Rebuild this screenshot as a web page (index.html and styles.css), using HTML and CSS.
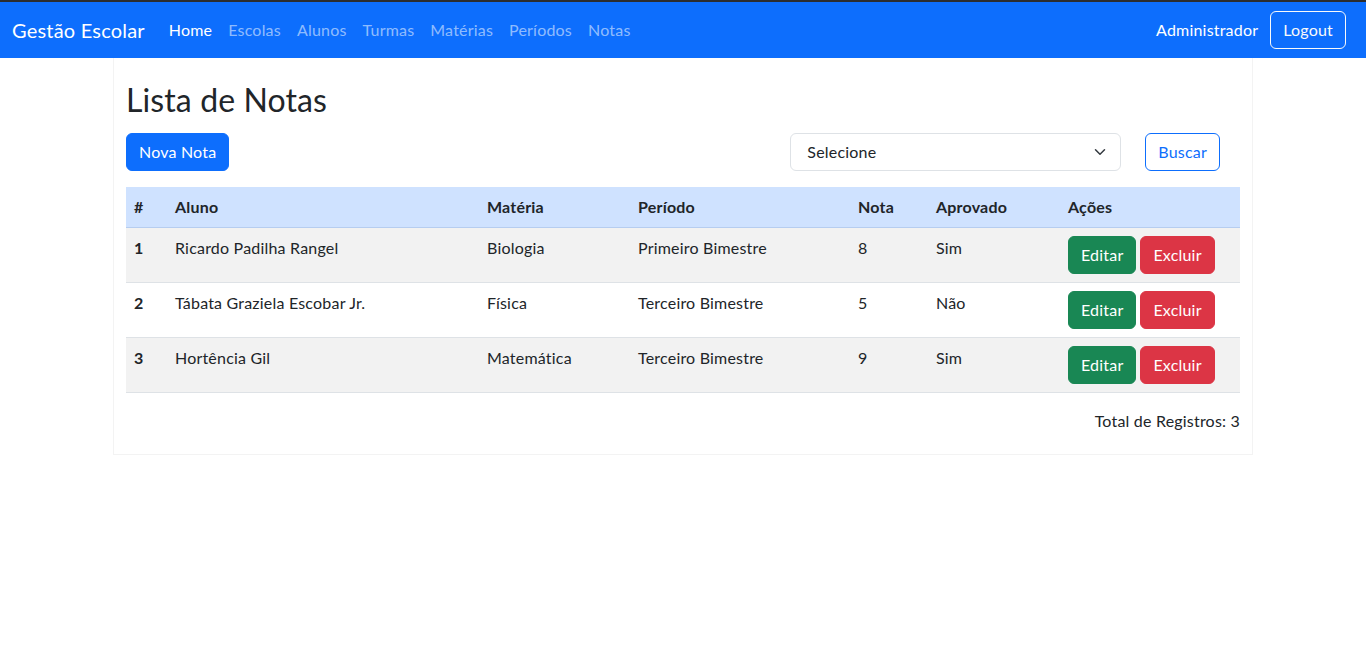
FILE: index.html
```html
<!DOCTYPE html>
<html lang="pt-BR">
<head>
<meta charset="utf-8">
<title>Gestão Escolar - Notas</title>
<link rel="stylesheet" href="styles.css">
</head>
<body>
<nav class="navbar">
  <div class="nav-left">
    <a class="brand" href="#">Gestão Escolar</a>
    <ul class="nav-links">
      <li><a class="nav-link active" href="#">Home</a></li>
      <li><a class="nav-link" href="#">Escolas</a></li>
      <li><a class="nav-link" href="#">Alunos</a></li>
      <li><a class="nav-link" href="#">Turmas</a></li>
      <li><a class="nav-link" href="#">Matérias</a></li>
      <li><a class="nav-link" href="#">Períodos</a></li>
      <li><a class="nav-link" href="#">Notas</a></li>
    </ul>
  </div>
  <div class="nav-right">
    <span class="user">Administrador</span>
    <button class="btn btn-outline-light">Logout</button>
  </div>
</nav>

<main class="container">
  <h2 class="title">Lista de Notas</h2>
  <div class="toolbar">
    <button class="btn btn-primary">Nova Nota</button>
    <form class="search">
      <div class="select">
        <span>Selecione</span>
        <svg width="12" height="12" viewBox="0 0 16 16"><path d="M2 5l6 6 6-6" fill="none" stroke="#343a40" stroke-width="2" stroke-linecap="round" stroke-linejoin="round"/></svg>
      </div>
      <button type="button" class="btn btn-outline-primary">Buscar</button>
    </form>
  </div>

  <table class="table">
    <colgroup>
      <col class="c-id"><col class="c-aluno"><col class="c-materia"><col class="c-periodo"><col class="c-nota"><col class="c-aprov"><col class="c-acoes">
    </colgroup>
    <thead>
      <tr><th>#</th><th>Aluno</th><th>Matéria</th><th>Período</th><th>Nota</th><th>Aprovado</th><th>Ações</th></tr>
    </thead>
    <tbody>
      <tr class="odd">
        <th>1</th><td>Ricardo Padilha Rangel</td><td>Biologia</td><td>Primeiro Bimestre</td><td>8</td><td>Sim</td>
        <td><div class="actions"><button class="btn btn-success">Editar</button><button class="btn btn-danger">Excluir</button></div></td>
      </tr>
      <tr>
        <th>2</th><td>Tábata Graziela Escobar Jr.</td><td>Física</td><td>Terceiro Bimestre</td><td>5</td><td>Não</td>
        <td><div class="actions"><button class="btn btn-success">Editar</button><button class="btn btn-danger">Excluir</button></div></td>
      </tr>
      <tr class="odd">
        <th>3</th><td>Hortência Gil</td><td>Matemática</td><td>Terceiro Bimestre</td><td>9</td><td>Sim</td>
        <td><div class="actions"><button class="btn btn-success">Editar</button><button class="btn btn-danger">Excluir</button></div></td>
      </tr>
    </tbody>
  </table>
  <p class="total">Total de Registros: 3</p>
</main>
</body>
</html>
```

FILE: styles.css
```css
* { box-sizing: border-box; }
html, body { margin: 0; }
body {
  font-family: "Lato", "Noto Sans", "Liberation Sans", sans-serif;
  font-size: 16px;
  line-height: 24px;
  letter-spacing: 0.2px;
  color: #212529;
  background: #fff;
}
.navbar {
  background: #0d6efd;
  border-top: 2px solid #2b2d30;
  height: 58px;
  padding: 0 20px 0 12px;
  display: flex;
  align-items: center;
  justify-content: space-between;
}
.nav-left { display: flex; align-items: center; }
.brand {
  color: #fff;
  text-decoration: none;
  font-size: 20px;
  line-height: 30px;
  margin-right: 16px;
}
.nav-links { list-style: none; margin: 0; padding: 0; display: flex; }
.nav-link {
  display: block;
  padding: 8px;
  color: rgba(255,255,255,0.55);
  text-decoration: none;
}
.nav-link.active { color: #fff; }
.nav-right { display: flex; align-items: center; gap: 12px; }
.user { color: #fff; }

.btn {
  font-family: inherit;
  font-size: 16px;
  line-height: 24px;
  letter-spacing: 0.2px;
  padding: 6px 12px;
  border: 1px solid transparent;
  border-radius: 6px;
  background: transparent;
  cursor: pointer;
}
.btn-outline-light { color: #f8f9fa; border-color: #f8f9fa; }
.btn-primary { background: #0d6efd; border-color: #0d6efd; color: #fff; }
.btn-outline-primary { color: #0d6efd; border-color: #0d6efd; }
.btn-success { background: #198754; border-color: #198754; color: #fff; }
.btn-danger { background: #dc3545; border-color: #dc3545; color: #fff; }

.container {
  width: 1140px;
  margin: 0 auto;
  padding: 23px 12px 21px;
  border: 1px solid #f3f3f3;
  border-top: none;
}
.title {
  font-size: 32px;
  font-weight: 400;
  line-height: 38px;
  letter-spacing: 0.1px;
  margin: 0 0 14px;
}
.toolbar {
  display: flex;
  justify-content: space-between;
  align-items: center;
  margin-bottom: 16px;
}
.search {
  display: flex;
  align-items: center;
  gap: 24px;
  margin: 0 20px 0 0;
}
.select {
  width: 331px;
  height: 38px;
  border: 1px solid #dee2e6;
  border-radius: 6px;
  display: flex;
  align-items: center;
  justify-content: space-between;
  padding: 0 14px 0 16px;
}
.table {
  width: 1114px;
  table-layout: fixed;
  border-collapse: collapse;
}
.c-id { width: 41px; }
.c-aluno { width: 312px; }
.c-materia { width: 151px; }
.c-periodo { width: 220px; }
.c-nota { width: 78px; }
.c-aprov { width: 132px; }
.c-acoes { width: 180px; }
.table th, .table td {
  padding: 8px;
  text-align: left;
  vertical-align: top;
  border-bottom: 1px solid #dee2e6;
}
.table thead th {
  background: #cfe2ff;
  border-bottom-color: #b6cdf0;
  font-weight: 700;
}
.table tbody tr.odd th, .table tbody tr.odd td { background: #f2f2f2; }
.actions { display: flex; gap: 4px; }
.total {
  text-align: right;
  margin: 16px 0 0;
}
```
